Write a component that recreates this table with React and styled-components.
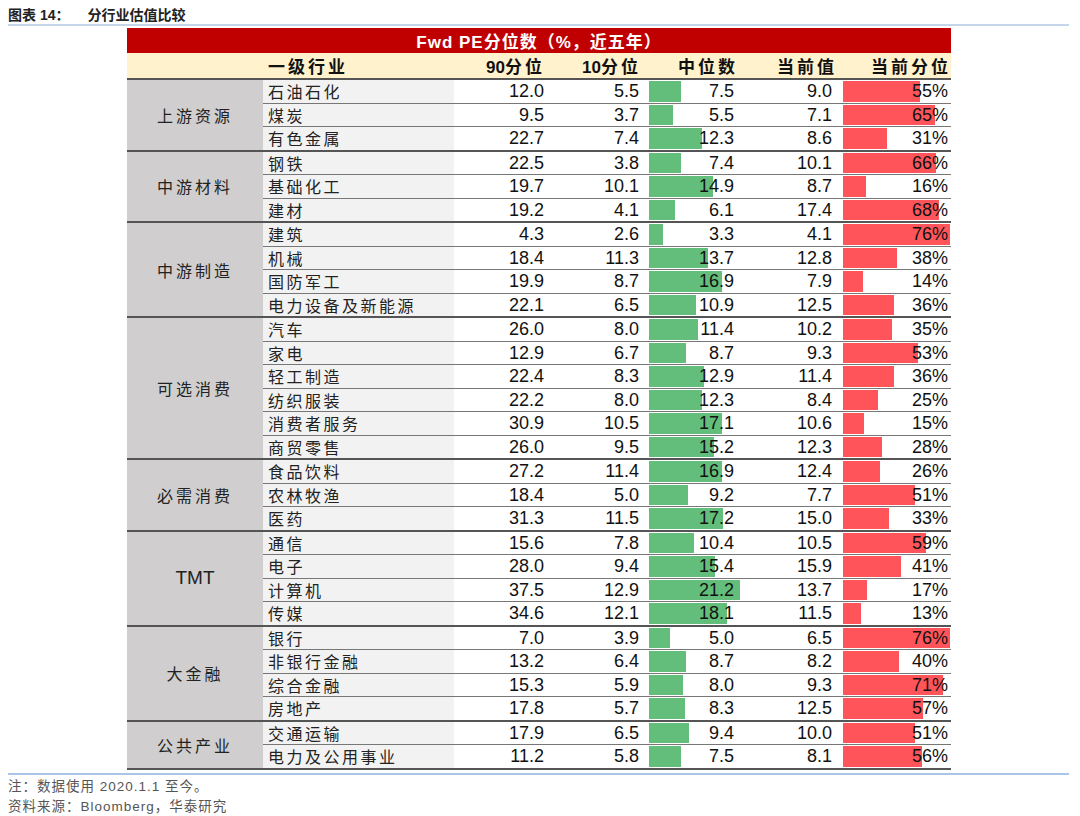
import React from 'react'
import styled, { createGlobalStyle } from 'styled-components'

const GlobalStyle = createGlobalStyle`
  html, body {
    margin: 0;
    padding: 0;
    background: #ffffff;
  }
  body {
    font-family: "Liberation Sans", "Noto Sans CJK SC", sans-serif;
    color: #111;
  }
`

const MED_MAX = 21.2
const PCT_MAX = 76

const groups = [
  { name: '上游资源', rows: [
    ['石油石化', '12.0', '5.5', 7.5, '9.0', 55],
    ['煤炭', '9.5', '3.7', 5.5, '7.1', 65],
    ['有色金属', '22.7', '7.4', 12.3, '8.6', 31]
  ] },
  { name: '中游材料', rows: [
    ['钢铁', '22.5', '3.8', 7.4, '10.1', 66],
    ['基础化工', '19.7', '10.1', 14.9, '8.7', 16],
    ['建材', '19.2', '4.1', 6.1, '17.4', 68]
  ] },
  { name: '中游制造', rows: [
    ['建筑', '4.3', '2.6', 3.3, '4.1', 76],
    ['机械', '18.4', '11.3', 13.7, '12.8', 38],
    ['国防军工', '19.9', '8.7', 16.9, '7.9', 14],
    ['电力设备及新能源', '22.1', '6.5', 10.9, '12.5', 36]
  ] },
  { name: '可选消费', rows: [
    ['汽车', '26.0', '8.0', 11.4, '10.2', 35],
    ['家电', '12.9', '6.7', 8.7, '9.3', 53],
    ['轻工制造', '22.4', '8.3', 12.9, '11.4', 36],
    ['纺织服装', '22.2', '8.0', 12.3, '8.4', 25],
    ['消费者服务', '30.9', '10.5', 17.1, '10.6', 15],
    ['商贸零售', '26.0', '9.5', 15.2, '12.3', 28]
  ] },
  { name: '必需消费', rows: [
    ['食品饮料', '27.2', '11.4', 16.9, '12.4', 26],
    ['农林牧渔', '18.4', '5.0', 9.2, '7.7', 51],
    ['医药', '31.3', '11.5', 17.2, '15.0', 33]
  ] },
  { name: 'TMT', latin: true, rows: [
    ['通信', '15.6', '7.8', 10.4, '10.5', 59],
    ['电子', '28.0', '9.4', 15.4, '15.9', 41],
    ['计算机', '37.5', '12.9', 21.2, '13.7', 17],
    ['传媒', '34.6', '12.1', 18.1, '11.5', 13]
  ] },
  { name: '大金融', rows: [
    ['银行', '7.0', '3.9', 5.0, '6.5', 76],
    ['非银行金融', '13.2', '6.4', 8.7, '8.2', 40],
    ['综合金融', '15.3', '5.9', 8.0, '9.3', 71],
    ['房地产', '17.8', '5.7', 8.3, '12.5', 57]
  ] },
  { name: '公共产业', rows: [
    ['交通运输', '17.9', '6.5', 9.4, '10.0', 51],
    ['电力及公用事业', '11.2', '5.8', 7.5, '8.1', 56]
  ] }
]

const Page = styled.div`
  width: 1080px;
  height: 816px;
  padding: 4px 0 0;
  box-sizing: border-box;
  overflow: hidden;
`

const TitleBar = styled.div`
  margin: 0 11px 0 8px;
  height: 20px;
  border-bottom: 2px solid #c5d5ea;
  display: flex;
  align-items: center;
  gap: 18px;
  font-size: 14px;
  font-weight: bold;
  color: #222;
  font-family: "Liberation Sans", "Noto Sans CJK SC", sans-serif;
`

const Table = styled.table`
  margin: 2px 0 0 127px;
  width: 824px;
  table-layout: fixed;
  border-collapse: collapse;
  font-size: 18px;
`

const BandCell = styled.th`
  height: 24px;
  padding: 0;
  background: #c00000;
  color: #fff;
  font-size: 17px;
  font-weight: bold;
  text-align: center;
  letter-spacing: 1px;
`

const HeadCell = styled.th`
  height: 22px;
  padding: 0 ${p => p.$pad || 0}px 0 ${p => p.$left || 0}px;
  background: #fff2cc;
  font-size: 17px;
  font-weight: bold;
  text-align: ${p => (p.$align || 'right')};
  letter-spacing: 3px;
  white-space: nowrap;
  color: #111;
`

const Digits = styled.span`
  letter-spacing: 0;
`

const DataRow = styled.tr`
  border-top: ${p => (p.$first ? '2px solid #555' : '1.5px solid #777')};
  &:last-child {
    border-bottom: 2px solid #555;
  }
`

const GroupCell = styled.td`
  background: #d0cece;
  text-align: center;
  padding: 0;
  font-family: ${p => (p.$latin ? '"Liberation Sans", sans-serif' : '"Noto Sans CJK SC", sans-serif')};
  font-size: ${p => (p.$latin ? '19px' : '16px')};
  letter-spacing: ${p => (p.$latin ? '0' : '3px')};
  color: #222;
`

const NameCell = styled.td`
  height: 22.5px;
  padding: 0 0 0 5px;
  background: #f2f2f2;
  font-family: "Noto Sans CJK SC", sans-serif;
  font-size: 16px;
  letter-spacing: 2.5px;
  color: #222;
  white-space: nowrap;
  line-height: 1;
`

const NumCell = styled.td`
  padding: 0 ${p => p.$pad}px 0 0;
  text-align: right;
  line-height: 1;
  color: #111;
`

const BarCell = styled.td`
  position: relative;
  padding: 0 ${p => p.$pad}px 0 0;
  text-align: right;
  line-height: 1;
  color: #111;
`

const Bar = styled.span`
  position: absolute;
  left: 1px;
  top: 1px;
  bottom: 1px;
  background: ${p => p.$color};
`

const BarValue = styled.span`
  position: relative;
`

const Notes = styled.div`
  margin: 3px 11px 0 8px;
  border-top: 2px solid #a9c6e8;
  padding-top: 2px;
  display: flex;
  flex-direction: column;
  font-family: "Liberation Sans", "Noto Sans CJK SC", sans-serif;
  font-size: 13.5px;
  line-height: 20px;
  color: #555;
  letter-spacing: 1px;
`

function Row({ row, group, first }) {
  const [name, p90, p10, med, cur, pct] = row
  return (
    <DataRow $first={first}>
      {first && (
        <GroupCell rowSpan={group.rows.length} $latin={group.latin}>{group.name}</GroupCell>
      )}
      <NameCell>{name}</NameCell>
      <NumCell $pad={1}>{p90}</NumCell>
      <NumCell $pad={9}>{p10}</NumCell>
      <BarCell $pad={8}>
        <Bar $color="#63be7b" style={{ width: `${(med / MED_MAX) * 91}px` }} />
        <BarValue>{med.toFixed(1)}</BarValue>
      </BarCell>
      <NumCell $pad={10}>{cur}</NumCell>
      <BarCell $pad={3}>
        <Bar $color="#ff555a" style={{ width: `${(pct / PCT_MAX) * 107}px` }} />
        <BarValue>{pct}%</BarValue>
      </BarCell>
    </DataRow>
  )
}

export default function App() {
  return (
    <Page>
      <GlobalStyle />
      <TitleBar>
        <span>图表 14：</span>
        <span>分行业估值比较</span>
      </TitleBar>
      <Table>
        <colgroup>
          <col style={{ width: 136 }} />
          <col style={{ width: 191 }} />
          <col style={{ width: 91 }} />
          <col style={{ width: 103 }} />
          <col style={{ width: 94 }} />
          <col style={{ width: 100 }} />
          <col style={{ width: 109 }} />
        </colgroup>
        <thead>
          <tr>
            <BandCell colSpan={7}>Fwd PE分位数（%，近五年）</BandCell>
          </tr>
          <tr>
            <HeadCell />
            <HeadCell $align="left" $left={5}>一级行业</HeadCell>
            <HeadCell $pad={0}><Digits>90</Digits>分位</HeadCell>
            <HeadCell $pad={7}><Digits>10</Digits>分位</HeadCell>
            <HeadCell $pad={4}>中位数</HeadCell>
            <HeadCell $pad={5}>当前值</HeadCell>
            <HeadCell $pad={0}>当前分位</HeadCell>
          </tr>
        </thead>
        <tbody>
          {groups.map(group =>
            group.rows.map((row, i) => (
              <Row key={row[0]} row={row} group={group} first={i === 0} />
            ))
          )}
        </tbody>
      </Table>
      <Notes>
        <span>注：数据使用 2020.1.1 至今。</span>
        <span>资料来源：Bloomberg，华泰研究</span>
      </Notes>
    </Page>
  )
}
